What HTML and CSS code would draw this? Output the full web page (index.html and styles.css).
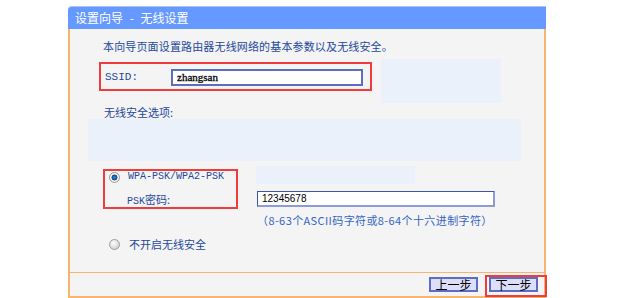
FILE: index.html
```html
<!DOCTYPE html>
<html lang="zh-CN">
<head>
    <meta charset="UTF-8">
    <title>设置向导 - 无线设置</title>
    <link rel="stylesheet" href="styles.css">
</head>
<body>
    <div class="panel">
        <div class="title">设置向导 - 无线设置</div>
        <div class="content">
            <p class="intro">本向导页面设置路由器无线网络的基本参数以及无线安全。</p>
            <div class="row">
                <div class="mark ssid-box">
                    <span class="code ssid-label">SSID:</span>
                    <input class="field ssid" type="text" value="zhangsan">
                </div>
                <div class="shade shade-ssid"></div>
            </div>
            <p class="label">无线安全选项:</p>
            <div class="shade shade-wide"></div>
            <div class="row">
                <div class="mark psk-box">
                    <div class="option on-option"><span class="radio on"></span><span class="code">WPA-PSK/WPA2-PSK</span></div>
                    <div class="psk-label"><span class="code">PSK</span>密码:</div>
                </div>
                <div class="psk-side">
                    <div class="shade shade-psk"></div>
                    <input class="field psk" type="text" value="12345678">
                    <div class="hint">（8-63个ASCII码字符或8-64个十六进制字符）</div>
                </div>
            </div>
            <div class="option off-option"><span class="radio"></span>不开启无线安全</div>
        </div>
        <div class="footer">
            <button class="btn prev">上一步</button>
            <span class="mark next-box"><button class="btn">下一步</button></span>
        </div>
    </div>
</body>
</html>
```

FILE: styles.css
```css
body {
    margin: 0;
    background: #fff;
    font-family: "Noto Sans CJK SC", "Liberation Sans", sans-serif;
    font-size: 11px;
    color: #24489c;
}
p {
    margin: 0;
}
.panel {
    width: 478px;
    margin: 6px 0 0 68px;
}
.title {
    height: 23px;
    box-sizing: border-box;
    border-top: 1px solid #a9c3ff;
    border-top-left-radius: 4px;
    background: #6699ff;
    color: #fff;
    font-size: 12px;
    line-height: 21px;
    padding-left: 7px;
    word-spacing: 4px;
}
.content {
    height: 244px;
    box-sizing: border-box;
    background: #f4f4f4;
    border-left: 2px solid #fbb46e;
    border-right: 2px solid #fbb46e;
    border-bottom: 1px solid #fbb46e;
    padding-top: 9px;
}
.intro {
    margin-left: 33px;
    line-height: 16px;
    letter-spacing: 0.15px;
}
.row {
    display: flex;
    align-items: flex-start;
    margin-top: 5px;
}
.mark {
    border: 2px solid #f03c3c;
    box-sizing: border-box;
}
.shade {
    background: #ebf1fa;
}
.code {
    font-family: "Liberation Mono", monospace;
    font-size: 10px;
}
.ssid-box {
    display: flex;
    align-items: center;
    width: 273px;
    height: 29px;
    margin: 3px 0 0 29px;
    padding-left: 4px;
}
.ssid-label {
    width: 66px;
    font-size: 11px;
}
.field {
    box-sizing: border-box;
    border: 2px solid #5c6ec2;
    background: #fff;
    padding: 0 4px;
    margin: 0;
    outline: none;
    color: #000;
}
.ssid {
    width: 192px;
    height: 17px;
    margin-top: 1px;
    font-family: "Liberation Serif", serif;
    font-size: 11px;
    -webkit-text-stroke: 0.3px #000;
}
.shade-ssid {
    width: 120px;
    height: 44px;
    margin-left: 9px;
}
.label {
    margin: 2px 0 0 34px;
    line-height: 14px;
}
.shade-wide {
    width: 433px;
    height: 42px;
    margin-left: 18px;
}
.psk-box {
    width: 135px;
    height: 40px;
    margin: 3px 0 0 33px;
    padding-left: 4px;
}
.option {
    display: flex;
    align-items: center;
    line-height: 12px;
}
.radio {
    width: 11px;
    height: 11px;
    box-sizing: border-box;
    border-radius: 50%;
    border: 1px solid #9c9c9c;
    background: radial-gradient(circle at 40% 35%, #fdfdfd, #d6d6d6 70%, #bdbdbd);
}
.radio.on {
    background: radial-gradient(circle, #2a8ad0 0, #1a62a6 30%, #0f3f6e 42%, #ffffff 52%, #e4e4e4 75%, #bcbcbc);
}
.on-option .radio {
    margin-right: 8px;
}
.psk-label {
    margin: 9px 0 0 18px;
    line-height: 14px;
}
.psk-side {
    margin-left: 18px;
}
.shade-psk {
    width: 159px;
    height: 18px;
}
.psk {
    display: block;
    width: 238px;
    height: 16px;
    margin: 7px 0 0 1px;
    border-width: 1px 2px 2px 1px;
    border-color: #3f54ae #8d9bd8 #8d9bd8 #3f54ae;
    font-family: "Liberation Sans", sans-serif;
    font-size: 10px;
}
.hint {
    margin: 6px 0 0 1px;
    line-height: 14px;
    letter-spacing: 0.4px;
    color: #3364c6;
}
.off-option {
    margin: 10px 0 0 39px;
    line-height: 14px;
}
.off-option .radio {
    margin-right: 9px;
}
.footer {
    height: 25px;
    box-sizing: border-box;
    background: #f4f4f4;
    border-left: 2px solid #fbb46e;
    border-right: 2px solid #fbb46e;
    border-bottom: 2px solid #fbb46e;
    display: flex;
    justify-content: flex-end;
    align-items: flex-start;
    padding-top: 2px;
}
.btn {
    width: 49px;
    height: 15px;
    box-sizing: border-box;
    padding: 0;
    border: 2px solid #5b6dc4;
    background: #dcdff7;
    color: #000;
    font-family: "Noto Sans CJK SC", sans-serif;
    font-size: 12px;
    font-weight: normal;
    line-height: 11px;
}
.prev {
    margin: 2px 7px 0 0;
}
.next-box {
    display: block;
    width: 62px;
    height: 22px;
    margin-right: -3px;
    padding-left: 2px;
    position: relative;
}
```
